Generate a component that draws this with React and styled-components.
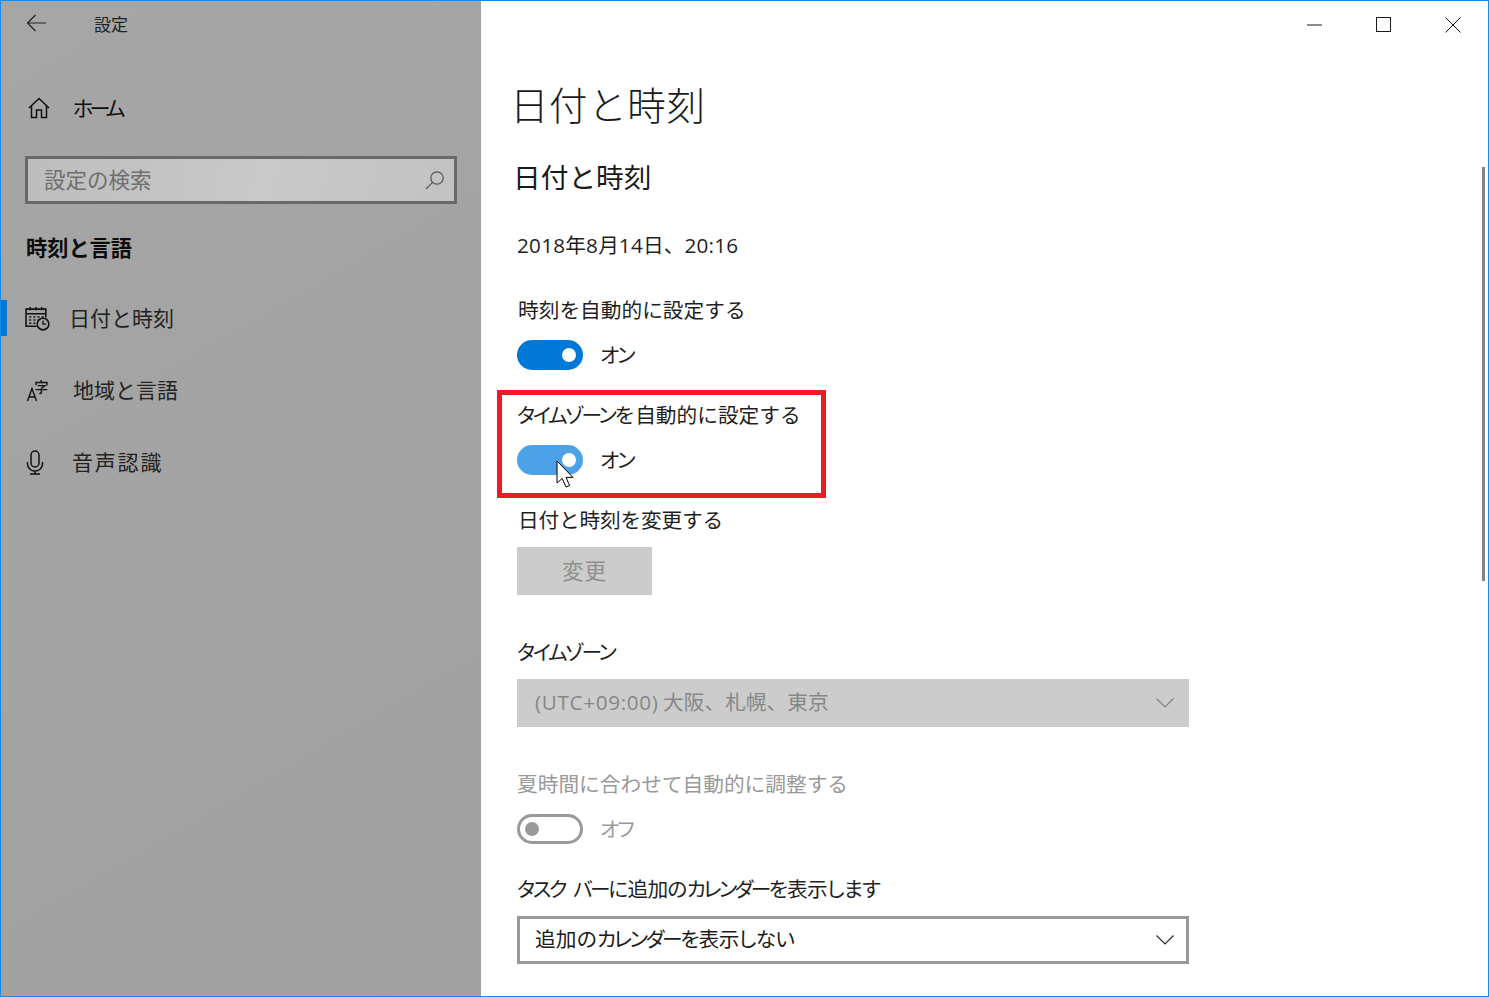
import React from "react";
import styled, { createGlobalStyle } from "styled-components";

const Global = createGlobalStyle`
  html, body { margin: 0; padding: 0; background: #fff; }
  body { font-family: "Open Sans", "Noto Sans CJK JP", sans-serif; overflow: hidden; }
  * { box-sizing: border-box; }
`;

const Window = styled.div`
  position: relative;
  width: 1489px;
  height: 997px;
  border: 1px solid #1e88e5;
  display: flex;
  overflow: hidden;
  background: #fff;
  color: #1a1a1a;
  font-family: "Noto Sans CJK JP", sans-serif;
`;

const Sidebar = styled.aside`
  width: 480px;
  flex: none;
  background: linear-gradient(150deg, #a6a6a6 0%, #a3a3a3 50%, #a1a1a1 100%);
  display: flex;
  flex-direction: column;
`;

const BackBar = styled.div`
  height: 47px;
  display: flex;
  align-items: center;
  padding: 0 0 3px 25px;
  gap: 47px;
  font-size: 17px;
  color: #222;
`;

const Home = styled.div`
  margin-top: 35px;
  height: 50px;
  display: flex;
  align-items: center;
  padding-left: 27px;
  gap: 23px;
  font-size: 21px;
  color: #111;
`;

const HomeLabel = styled.span`
  margin-top: -3px;
  font-feature-settings: "palt";
  letter-spacing: -3.8px;
`;

const Search = styled.div`
  margin: 23px 0 0 24px;
  width: 432px;
  height: 48px;
  border: 3px solid #696969;
  background: linear-gradient(100deg, #bdbdbd 0%, #c9c9c9 55%, #c2c2c2 100%);
  display: flex;
  align-items: center;
  justify-content: space-between;
  padding: 0 9px 0 16px;
  font-size: 21.5px;
  color: #6e6e6e;
`;

const SearchLabel = styled.span`
  margin-top: -4px;
`;

const SectionTitle = styled.div`
  margin: 28px 0 0 25px;
  height: 34px;
  line-height: 30px;
  font-size: 21.2px;
  font-weight: 700;
  color: #0c0c0c;
`;

const NavList = styled.nav`
  margin-top: 34px;
  display: flex;
  flex-direction: column;
  gap: 36px;
`;

const NavItem = styled.div`
  position: relative;
  height: 36px;
  display: flex;
  align-items: center;
  padding-left: ${(p) => p.$pad}px;
  gap: ${(p) => p.$gap}px;
  font-size: 21px;
  color: #222;
  ${(p) =>
    p.$active &&
    `&::before { content: ""; position: absolute; left: 0; top: 0; width: 6px; height: 36px; background: #0078d7; }`}
`;

const NavLabel = styled.span`
  margin-top: -3px;
  letter-spacing: ${(p) => p.$ls || 0}px;
`;

const NavIcon = styled.span`
  width: 25px;
  height: 30px;
  flex: none;
  display: flex;
  align-items: center;
  justify-content: center;
`;

const Main = styled.main`
  flex: 1;
  display: flex;
  flex-direction: column;
  padding-left: 36px;
`;

const Controls = styled.div`
  height: 47px;
  margin-right: 1px;
  display: flex;
  justify-content: flex-end;
`;

const ControlButton = styled.div`
  width: 69px;
  height: 47px;
  display: flex;
  align-items: center;
  justify-content: center;
`;

const PageTitle = styled.h1`
  margin: 28px 0 0 -7px;
  height: 60px;
  line-height: 55px;
  font-size: 38.5px;
  font-weight: 300;
  letter-spacing: 0.6px;
  color: #1a1a1a;
`;

const SubTitle = styled.h2`
  margin: 21px 0 0 -4px;
  height: 40px;
  line-height: 38px;
  font-size: 27.7px;
  font-weight: 400;
  color: #1a1a1a;
`;

const Text = styled.div`
  margin: ${(p) => p.$mt}px 0 0 ${(p) => p.$ml || 0}px;
  height: 30px;
  line-height: 28px;
  font-size: 20.7px;
  letter-spacing: ${(p) => p.$ls || 0}px;
  white-space: nowrap;
  color: ${(p) => (p.$dim ? "#999" : "#1f1f1f")};
`;

const Kana = styled.span`
  font-feature-settings: "palt";
  letter-spacing: ${(p) => p.$ls ?? -2.4}px;
  margin-right: ${(p) => p.$mr || 0}px;
`;

const ToggleRow = styled.div`
  margin-top: 15px;
  height: 30px;
  display: flex;
  align-items: center;
  gap: 18px;
  font-size: 20.7px;
  color: ${(p) => (p.$dim ? "#999" : "#1f1f1f")};
`;

const ToggleLabel = styled.span`
  margin: -3px 0 0 -1px;
  font-feature-settings: "palt";
  letter-spacing: -1.8px;
`;

const Track = styled.div`
  width: 66px;
  height: 30px;
  border-radius: 15px;
  display: flex;
  align-items: center;
  justify-content: ${(p) => (p.$on ? "flex-end" : "flex-start")};
  padding: 0 7px;
  background: ${(p) => (p.$on ? p.$color : "transparent")};
  border: ${(p) => (p.$on ? "none" : "3px solid #999")};
`;

const Knob = styled.div`
  width: 14px;
  height: 14px;
  border-radius: 50%;
  flex: none;
  background: ${(p) => (p.$on ? "#fff" : "#999")};
  margin: ${(p) => (p.$on ? "0" : "0 0 0 -2px")};
`;

const ChangeButton = styled.div`
  margin-top: 12px;
  width: 135px;
  height: 48px;
  background: #ccc;
  color: #8f8f8f;
  font-size: 21.5px;
  letter-spacing: 1px;
  display: flex;
  align-items: center;
  justify-content: center;
  padding-bottom: 4px;
`;

const Select = styled.div`
  margin-top: 12px;
  width: 672px;
  height: 48px;
  display: flex;
  align-items: center;
  justify-content: space-between;
  padding: 0 ${(p) => (p.$disabled ? "15px" : "12px")} 0 ${(p) => (p.$disabled ? "18px" : "15px")};
  font-size: 20.7px;
  white-space: nowrap;
  background: ${(p) => (p.$disabled ? "#ccc" : "#fff")};
  color: ${(p) => (p.$disabled ? "#878787" : "#1a1a1a")};
  border: ${(p) => (p.$disabled ? "none" : "3px solid #999")};
`;

const SelectText = styled.span`
  margin-top: -4px;
`;

const Latin = styled.span`
  font-family: "Open Sans", sans-serif;
  letter-spacing: ${(p) => p.$ls || 0}px;
`;

const Scrollbar = styled.div`
  position: absolute;
  left: 1481px;
  top: 166px;
  width: 3px;
  height: 414px;
  background: #858585;
`;

const Highlight = styled.div`
  position: absolute;
  left: 496px;
  top: 389px;
  width: 329px;
  height: 108px;
  border: 5px solid #ed1c24;
  pointer-events: none;
`;

const Cursor = styled.svg`
  position: absolute;
  left: 554px;
  top: 459px;
`;

const Chevron = ({ color }) => (
  <svg width="18" height="10" viewBox="0 0 18 10" fill="none" stroke={color} strokeWidth="1.1">
    <path d="M0.5 0.5 L9 9 L17.5 0.5" />
  </svg>
);

const Check = ({ label, on, color, dim }) => (
  <ToggleRow $dim={dim}>
    <Track $on={on} $color={color}>
      <Knob $on={on} />
    </Track>
    <ToggleLabel>{label}</ToggleLabel>
  </ToggleRow>
);

export default function App() {
  return (
    <>
      <Global />
      <Window>
        <Sidebar>
          <BackBar>
            <svg width="21" height="18" viewBox="0 0 21 18" fill="none" stroke="#222" strokeWidth="1.2">
              <path d="M20 9 H1.5 M9.5 1 L1.5 9 L9.5 17" />
            </svg>
            設定
          </BackBar>
          <Home>
            <svg width="22" height="22" viewBox="0 0 22 22" fill="none" stroke="#111" strokeWidth="1.5">
              <path d="M1 11 L11 1.5 L21 11 M3.5 9 V20.5 H8.5 V13 H13.5 V20.5 H18.5 V9" />
            </svg>
            <HomeLabel>ホーム</HomeLabel>
          </Home>
          <Search>
            <SearchLabel>設定の検索</SearchLabel>
            <svg width="20" height="20" viewBox="0 0 20 20" fill="none" stroke="#555" strokeWidth="1.2">
              <circle cx="12" cy="8" r="6.2" />
              <path d="M7.6 12.4 L1 19" />
            </svg>
          </Search>
          <SectionTitle>時刻と言語</SectionTitle>
          <NavList>
            <NavItem $active $pad={24} $gap={19}>
              <NavIcon>
                <svg width="25" height="25" viewBox="0 0 24 24" fill="none" stroke="#111" strokeWidth="1.5">
                  <path d="M11 19.5 H1 V3 H20 V11 M1 7.5 H20 M5 1 V4 M10.5 1 V4 M16 1 V4" />
                  <path d="M4 10.5h2M8 10.5h2M12 10.5h2M16 10.5h2M4 13.5h2M8 13.5h2M12 13.5h1M4 16.5h2M8 16.5h2" />
                  <circle cx="17.3" cy="17.3" r="5.6" fill="#a3a3a3" />
                  <path d="M17.3 14 V17.5 H20.3" strokeWidth="1.2" />
                </svg>
              </NavIcon>
              <NavLabel>日付と時刻</NavLabel>
            </NavItem>
            <NavItem $pad={25} $gap={22}>
              <NavIcon>
                <svg width="25" height="26" viewBox="0 0 25 26" fill="none" stroke="#111" strokeWidth="1.4">
                  <path d="M1.5 24 L6 11.5 L10.5 24 M3 20 H9" />
                  <path d="M15.2 3 V5.5 M10 8.2 V5.5 H21 V8.2 M11.8 8.6 H19 L15.4 11.2 M9.7 12.6 H21.3 M15.4 11.2 V15.4 Q15.4 16.6 13.2 16.4" />
                </svg>
              </NavIcon>
              <NavLabel>地域と言語</NavLabel>
            </NavItem>
            <NavItem $pad={21} $gap={25}>
              <NavIcon>
                <svg width="18" height="25" viewBox="0 0 18 25" fill="none" stroke="#111" strokeWidth="1.5">
                  <rect x="5" y="1" width="8" height="16" rx="4" />
                  <path d="M1.5 12 V14 A7.5 7 0 0 0 16.5 14 V12 M9 21 V24 M4 24 H14" />
                </svg>
              </NavIcon>
              <NavLabel $ls={1.8}>音声認識</NavLabel>
            </NavItem>
          </NavList>
        </Sidebar>
        <Main>
          <Controls>
            <ControlButton>
              <svg width="16" height="2" viewBox="0 0 16 2"><path d="M0 1 H15" stroke="#1a1a1a" strokeWidth="1" /></svg>
            </ControlButton>
            <ControlButton>
              <svg width="16" height="16" viewBox="0 0 16 16"><rect x="0.5" y="0.5" width="14" height="14" fill="none" stroke="#1a1a1a" strokeWidth="1" /></svg>
            </ControlButton>
            <ControlButton>
              <svg width="16" height="16" viewBox="0 0 16 16"><path d="M0.5 0.5 L15.5 15.5 M15.5 0.5 L0.5 15.5" stroke="#1a1a1a" strokeWidth="1" /></svg>
            </ControlButton>
          </Controls>
          <PageTitle>日付と時刻</PageTitle>
          <SubTitle>日付と時刻</SubTitle>
          <Text $mt={33}><Latin $ls={0.25}>2018</Latin>年<Latin $ls={0.25}>8</Latin>月<Latin $ls={0.25}>14</Latin>日、<Latin $ls={0.25}>20:16</Latin></Text>
          <Text $mt={35} $ml={1}>時刻を自動的に設定する</Text>
          <Check on color="#0078d7" label="オン" />
          <Text $mt={30}><Kana>タイムゾーン</Kana>を自動的に設定する</Text>
          <Check on color="#4da1e6" label="オン" />
          <Text $mt={30} $ml={1} $ls={-0.2}>日付と時刻を変更する</Text>
          <ChangeButton>変更</ChangeButton>
          <Text $mt={42}><Kana>タイムゾーン</Kana></Text>
          <Select $disabled>
            <SelectText><Latin $ls={0.65}>(UTC+09:00)</Latin> 大阪、札幌、東京</SelectText>
            <Chevron color="#7f7f7f" />
          </Select>
          <Text $mt={42} $dim>夏時間に合わせて自動的に調整する</Text>
          <Check dim label="オフ" />
          <Text $mt={30}><Kana $mr={8}>タスク</Kana><Kana>バー</Kana><Kana $ls={-0.7}>に追加の</Kana><Kana $ls={-2.6}>カレンダー</Kana><Kana $ls={-0.7}>を表示します</Kana></Text>
          <Select>
            <SelectText>追加の<Kana>カレンダー</Kana><Kana $ls={-0.6}>を表示しない</Kana></SelectText>
            <Chevron color="#222" />
          </Select>
        </Main>
        <Scrollbar />
        <Highlight />
        <Cursor width="24" height="32" viewBox="0 0 24 32">
          <path d="M2 1 V23 L7.2 18.5 L11 27 L14.6 25.5 L11 17.4 L18 17.4 Z" fill="#fff" stroke="#000" strokeWidth="1" />
        </Cursor>
      </Window>
    </>
  );
}
